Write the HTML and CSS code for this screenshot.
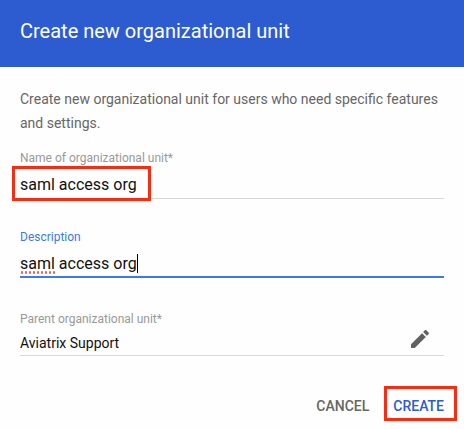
FILE: index.html
```html
<!DOCTYPE html>
<html lang="en">
<head>
<meta charset="utf-8">
<title>Create new organizational unit</title>
<link rel="stylesheet" href="styles.css">
</head>
<body>
<main class="dialog">
  <header class="header"><h1 class="title">Create new organizational unit</h1></header>
  <div class="body">
    <p class="intro">Create new organizational unit for users who need specific features and settings.</p>
    <div class="field field-name">
      <div class="label">Name of organizational unit*</div>
      <div class="value">saml access org</div>
      <span class="mark mark-name"></span>
    </div>
    <div class="field field-desc">
      <div class="label">Description</div>
      <div class="value"><span class="misspelt">saml</span> access org<span class="caret"></span></div>
    </div>
    <div class="field field-parent">
      <div>
        <div class="label">Parent organizational unit*</div>
        <div class="value">Aviatrix Support</div>
      </div>
      <svg class="pencil" viewBox="0 0 24 24" width="24" height="24"><path fill="#616161" d="M3 17.25V21h3.75L17.81 9.94l-3.75-3.75L3 17.25zM20.71 7.04c.39-.39.39-1.02 0-1.41l-2.34-2.34c-.39-.39-1.02-.39-1.41 0l-1.83 1.83 3.75 3.75 1.83-1.83z"/></svg>
    </div>
    <div class="actions">
      <span class="button">CANCEL</span>
      <span class="button primary">CREATE<span class="mark mark-create"></span></span>
    </div>
  </div>
</main>
</body>
</html>
```

FILE: styles.css
```css
* { box-sizing: border-box; }
body {
  margin: 0;
  background: #fefefe;
  font-family: Roboto, sans-serif;
  color: #111;
  overflow: hidden;
}
.dialog { width: 464px; height: 429px; }
.header {
  height: 67px;
  padding: 19px 20px 0;
  background: #2c5cd0;
}
.title {
  margin: 0;
  font-size: 20px;
  line-height: 24px;
  font-weight: 400;
  color: #fff;
  white-space: nowrap;
}
.body { padding: 20px 20px 0; }
.intro {
  margin: 0;
  font-size: 14px;
  line-height: 24px;
  color: #666;
}
.field {
  position: relative;
  border-bottom: 1px solid #d8d8d8;
}
.label {
  font-size: 12px;
  line-height: 16px;
  color: #999;
}
.value {
  font-size: 16px;
  line-height: 20px;
  white-space: nowrap;
}
.field-name { margin-top: 15px; height: 49px; }
.field-name .value { margin-top: 9px; }
.field-desc {
  margin-top: 30px;
  height: 49px;
  border-bottom: 2px solid #3c78ee;
}
.field-desc .label { color: #3c78ee; }
.field-desc .value { display: flex; white-space: pre; margin-top: 9px; }
.misspelt {
  height: 20px;
  background: radial-gradient(circle at center, #ee5f59 1px, transparent 1.5px) 0 100% / 4px 3px repeat-x;
}
.caret { width: 1px; height: 19px; background: #000; }
.field-parent {
  margin-top: 33px;
  height: 45px;
  display: flex;
  justify-content: space-between;
  padding-right: 12px;
}
.field-parent .value { margin-top: 6px; font-size: 14px; }
.pencil { margin-top: 16px; }
.actions {
  display: flex;
  justify-content: flex-end;
  gap: 24px;
  margin-top: 41px;
}
.button {
  position: relative;
  font-size: 14px;
  line-height: 18px;
  font-weight: 500;
  color: #666;
}
.primary { color: #2c5cd0; }
.mark { position: absolute; border: 3px solid #fa2b10; }
.mark-name { left: -8px; top: 16px; width: 139px; height: 35px; }
.mark-create { left: -9px; top: -11px; width: 73px; height: 35px; }
```
